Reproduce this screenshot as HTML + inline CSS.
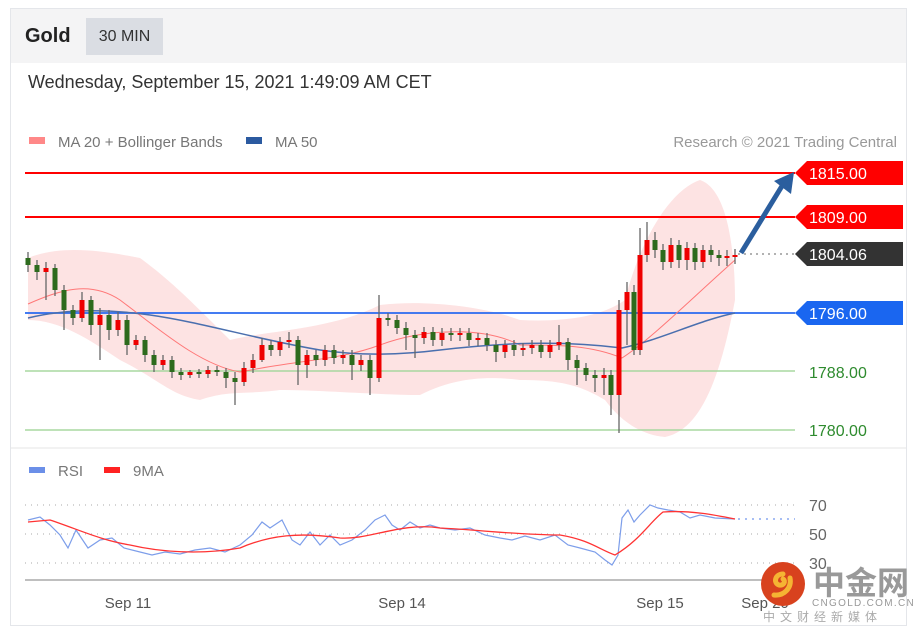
<!DOCTYPE html>
<html><head><meta charset="utf-8">
<style>
body{margin:0;background:#fff;width:916px;height:633px;overflow:hidden;font-family:"Liberation Sans",sans-serif;}
#box{position:absolute;left:10px;top:8px;width:895px;height:616px;border:1px solid #e4e6ea;}
#hdr{position:absolute;left:11px;top:9px;width:895px;height:54px;background:#f4f4f5;}
#gold{position:absolute;left:25px;top:25px;font-size:20px;font-weight:bold;color:#222;}
#tf{position:absolute;left:86px;top:18px;width:77px;height:37px;background:#dadde3;font-size:16px;color:#333;line-height:37px;text-align:center;}
#date{position:absolute;left:28px;top:72px;font-size:18px;color:#333;}
svg{position:absolute;left:0;top:0;}
.c line{stroke:#666;stroke-width:1.3}
.c .r{fill:#e00}.c .g{fill:#2d6b1d}
</style></head><body>
<div id="box"></div><div id="hdr"></div>
<div id="gold">Gold</div><div id="tf">30 MIN</div>
<div id="date">Wednesday, September 15, 2021 1:49:09 AM CET</div>
<svg width="916" height="633" font-family="Liberation Sans, sans-serif">
<rect x="29" y="137" width="16" height="7" fill="#f88"/>
<text x="58" y="147" font-size="15" fill="#777">MA 20 + Bollinger Bands</text>
<rect x="246" y="137" width="16" height="7" fill="#2b5aa0"/>
<text x="275" y="147" font-size="15" fill="#777">MA 50</text>
<text x="897" y="147" font-size="15" fill="#999" text-anchor="end">Research © 2021 Trading Central</text>
<line x1="11" y1="448" x2="906" y2="448" stroke="#e6e6e6"/>
<path fill="#fde3e3" d="M28 258 C60 245 100 250 140 258 C170 280 190 300 230 340 C270 330 330 330 380 305 C420 300 480 305 520 320 C560 322 600 318 625 300 C640 240 670 190 700 180 C730 190 735 260 735 300 C720 380 700 430 665 437 C640 435 620 420 605 400 C580 385 560 380 520 380 C480 375 450 380 420 395 C380 395 320 390 280 390 C240 395 230 390 200 400 C170 395 160 380 120 360 C90 340 60 320 28 320 Z"/>
<line x1="25" y1="371" x2="795" y2="371" stroke="#a8d8a0" stroke-width="1.5"/>
<line x1="25" y1="430" x2="795" y2="430" stroke="#a8d8a0" stroke-width="1.5"/>
<line x1="25" y1="173" x2="795" y2="173" stroke="#f00" stroke-width="2"/>
<line x1="25" y1="217" x2="795" y2="217" stroke="#f00" stroke-width="2"/>
<line x1="25" y1="313" x2="795" y2="313" stroke="#2a6af0" stroke-width="1.8"/>
<line x1="738" y1="254" x2="795" y2="254" stroke="#666" stroke-dasharray="2,4"/>
<path d="M28 304 C60 290 90 280 120 300 C160 330 200 365 240 372 C300 360 340 360 380 345 C420 330 480 325 520 345 C560 345 590 345 622 358 C650 340 690 300 735 260" fill="none" stroke="#f77" stroke-width="1"/>
<path d="M28 318 C60 310 100 308 150 315 C200 322 260 340 320 350 C360 356 400 355 440 350 C500 343 560 340 622 348 C660 340 700 320 735 313" fill="none" stroke="#4a6fae" stroke-width="1.5"/>
<g class="c">
<line x1="28" y1="252" x2="28" y2="272"/><rect class="g" x="25.5" y="258" width="5" height="7"/>
<line x1="37" y1="260" x2="37" y2="280"/><rect class="g" x="34.5" y="265" width="5" height="7"/>
<line x1="46" y1="262" x2="46" y2="300"/><rect class="r" x="43.5" y="268" width="5" height="4"/>
<line x1="55" y1="264" x2="55" y2="296"/><rect class="g" x="52.5" y="268" width="5" height="22"/>
<line x1="64" y1="285" x2="64" y2="330"/><rect class="g" x="61.5" y="290" width="5" height="20"/>
<line x1="73" y1="305" x2="73" y2="325"/><rect class="g" x="70.5" y="310" width="5" height="8"/>
<line x1="82" y1="292" x2="82" y2="322"/><rect class="r" x="79.5" y="300" width="5" height="18"/>
<line x1="91" y1="296" x2="91" y2="335"/><rect class="g" x="88.5" y="300" width="5" height="25"/>
<line x1="100" y1="308" x2="100" y2="360"/><rect class="r" x="97.5" y="315" width="5" height="10"/>
<line x1="109" y1="310" x2="109" y2="340"/><rect class="g" x="106.5" y="315" width="5" height="15"/>
<line x1="118" y1="312" x2="118" y2="336"/><rect class="r" x="115.5" y="320" width="5" height="10"/>
<line x1="127" y1="315" x2="127" y2="355"/><rect class="g" x="124.5" y="320" width="5" height="25"/>
<line x1="136" y1="335" x2="136" y2="350"/><rect class="r" x="133.5" y="340" width="5" height="5"/>
<line x1="145" y1="336" x2="145" y2="362"/><rect class="g" x="142.5" y="340" width="5" height="15"/>
<line x1="154" y1="350" x2="154" y2="372"/><rect class="g" x="151.5" y="355" width="5" height="10"/>
<line x1="163" y1="355" x2="163" y2="370"/><rect class="r" x="160.5" y="360" width="5" height="5"/>
<line x1="172" y1="356" x2="172" y2="378"/><rect class="g" x="169.5" y="360" width="5" height="12"/>
<line x1="181" y1="368" x2="181" y2="380"/><rect class="g" x="178.5" y="372" width="5" height="3"/>
<line x1="190" y1="370" x2="190" y2="378"/><rect class="r" x="187.5" y="372" width="5" height="3"/>
<line x1="199" y1="369" x2="199" y2="378"/><rect class="g" x="196.5" y="372" width="5" height="2"/>
<line x1="208" y1="366" x2="208" y2="378"/><rect class="r" x="205.5" y="370" width="5" height="4"/>
<line x1="217" y1="366" x2="217" y2="376"/><rect class="g" x="214.5" y="370" width="5" height="2"/>
<line x1="226" y1="368" x2="226" y2="388"/><rect class="g" x="223.5" y="372" width="5" height="6"/>
<line x1="235" y1="372" x2="235" y2="405"/><rect class="g" x="232.5" y="378" width="5" height="4"/>
<line x1="244" y1="362" x2="244" y2="386"/><rect class="r" x="241.5" y="368" width="5" height="14"/>
<line x1="253" y1="354" x2="253" y2="373"/><rect class="r" x="250.5" y="360" width="5" height="8"/>
<line x1="262" y1="338" x2="262" y2="362"/><rect class="r" x="259.5" y="345" width="5" height="15"/>
<line x1="271" y1="340" x2="271" y2="356"/><rect class="g" x="268.5" y="345" width="5" height="5"/>
<line x1="280" y1="337" x2="280" y2="356"/><rect class="r" x="277.5" y="342" width="5" height="8"/>
<line x1="289" y1="332" x2="289" y2="348"/><rect class="r" x="286.5" y="340" width="5" height="2"/>
<line x1="298" y1="336" x2="298" y2="385"/><rect class="g" x="295.5" y="340" width="5" height="25"/>
<line x1="307" y1="350" x2="307" y2="378"/><rect class="r" x="304.5" y="355" width="5" height="10"/>
<line x1="316" y1="350" x2="316" y2="366"/><rect class="g" x="313.5" y="355" width="5" height="5"/>
<line x1="325" y1="345" x2="325" y2="366"/><rect class="r" x="322.5" y="350" width="5" height="10"/>
<line x1="334" y1="345" x2="334" y2="364"/><rect class="g" x="331.5" y="350" width="5" height="8"/>
<line x1="343" y1="350" x2="343" y2="364"/><rect class="r" x="340.5" y="355" width="5" height="3"/>
<line x1="352" y1="350" x2="352" y2="380"/><rect class="g" x="349.5" y="355" width="5" height="10"/>
<line x1="361" y1="355" x2="361" y2="371"/><rect class="r" x="358.5" y="360" width="5" height="5"/>
<line x1="370" y1="355" x2="370" y2="395"/><rect class="g" x="367.5" y="360" width="5" height="18"/>
<line x1="379" y1="295" x2="379" y2="382"/><rect class="r" x="376.5" y="318" width="5" height="60"/>
<line x1="388" y1="313" x2="388" y2="326"/><rect class="g" x="385.5" y="318" width="5" height="2"/>
<line x1="397" y1="315" x2="397" y2="334"/><rect class="g" x="394.5" y="320" width="5" height="8"/>
<line x1="406" y1="322" x2="406" y2="350"/><rect class="g" x="403.5" y="328" width="5" height="7"/>
<line x1="415" y1="330" x2="415" y2="358"/><rect class="g" x="412.5" y="335" width="5" height="3"/>
<line x1="424" y1="327" x2="424" y2="344"/><rect class="r" x="421.5" y="332" width="5" height="6"/>
<line x1="433" y1="327" x2="433" y2="346"/><rect class="g" x="430.5" y="332" width="5" height="8"/>
<line x1="442" y1="328" x2="442" y2="346"/><rect class="r" x="439.5" y="333" width="5" height="7"/>
<line x1="451" y1="328" x2="451" y2="341"/><rect class="g" x="448.5" y="333" width="5" height="2"/>
<line x1="460" y1="328" x2="460" y2="341"/><rect class="r" x="457.5" y="333" width="5" height="2"/>
<line x1="469" y1="328" x2="469" y2="346"/><rect class="g" x="466.5" y="333" width="5" height="7"/>
<line x1="478" y1="333" x2="478" y2="346"/><rect class="r" x="475.5" y="338" width="5" height="2"/>
<line x1="487" y1="333" x2="487" y2="351"/><rect class="g" x="484.5" y="338" width="5" height="7"/>
<line x1="496" y1="340" x2="496" y2="362"/><rect class="g" x="493.5" y="345" width="5" height="7"/>
<line x1="505" y1="340" x2="505" y2="358"/><rect class="r" x="502.5" y="345" width="5" height="7"/>
<line x1="514" y1="340" x2="514" y2="356"/><rect class="g" x="511.5" y="345" width="5" height="5"/>
<line x1="523" y1="343" x2="523" y2="356"/><rect class="r" x="520.5" y="348" width="5" height="2"/>
<line x1="532" y1="340" x2="532" y2="354"/><rect class="r" x="529.5" y="345" width="5" height="3"/>
<line x1="541" y1="340" x2="541" y2="358"/><rect class="g" x="538.5" y="345" width="5" height="7"/>
<line x1="550" y1="340" x2="550" y2="358"/><rect class="r" x="547.5" y="345" width="5" height="7"/>
<line x1="559" y1="325" x2="559" y2="350"/><rect class="r" x="556.5" y="342" width="5" height="3"/>
<line x1="568" y1="338" x2="568" y2="370"/><rect class="g" x="565.5" y="342" width="5" height="18"/>
<line x1="577" y1="355" x2="577" y2="385"/><rect class="g" x="574.5" y="360" width="5" height="8"/>
<line x1="586" y1="363" x2="586" y2="381"/><rect class="g" x="583.5" y="368" width="5" height="7"/>
<line x1="595" y1="370" x2="595" y2="392"/><rect class="g" x="592.5" y="375" width="5" height="3"/>
<line x1="604" y1="368" x2="604" y2="395"/><rect class="r" x="601.5" y="375" width="5" height="3"/>
<line x1="611" y1="370" x2="611" y2="415"/><rect class="g" x="608.5" y="375" width="5" height="20"/>
<line x1="619" y1="300" x2="619" y2="433"/><rect class="r" x="616.5" y="310" width="5" height="85"/>
<line x1="627" y1="282" x2="627" y2="345"/><rect class="r" x="624.5" y="292" width="5" height="18"/>
<line x1="634" y1="285" x2="634" y2="355"/><rect class="g" x="631.5" y="292" width="5" height="58"/>
<line x1="640" y1="228" x2="640" y2="355"/><rect class="r" x="637.5" y="255" width="5" height="95"/>
<line x1="647" y1="222" x2="647" y2="262"/><rect class="r" x="644.5" y="240" width="5" height="15"/>
<line x1="655" y1="232" x2="655" y2="258"/><rect class="g" x="652.5" y="240" width="5" height="10"/>
<line x1="663" y1="244" x2="663" y2="270"/><rect class="g" x="660.5" y="250" width="5" height="12"/>
<line x1="671" y1="238" x2="671" y2="268"/><rect class="r" x="668.5" y="245" width="5" height="17"/>
<line x1="679" y1="240" x2="679" y2="268"/><rect class="g" x="676.5" y="245" width="5" height="15"/>
<line x1="687" y1="242" x2="687" y2="270"/><rect class="r" x="684.5" y="248" width="5" height="12"/>
<line x1="695" y1="243" x2="695" y2="270"/><rect class="g" x="692.5" y="248" width="5" height="14"/>
<line x1="703" y1="245" x2="703" y2="268"/><rect class="r" x="700.5" y="250" width="5" height="12"/>
<line x1="711" y1="245" x2="711" y2="262"/><rect class="g" x="708.5" y="250" width="5" height="5"/>
<line x1="719" y1="250" x2="719" y2="266"/><rect class="g" x="716.5" y="255" width="5" height="3"/>
<line x1="727" y1="250" x2="727" y2="266"/><rect class="r" x="724.5" y="256" width="5" height="2"/>
<line x1="735" y1="249" x2="735" y2="264"/><rect class="r" x="732.5" y="255" width="5" height="2"/>
</g>
<path d="M741 253 L782 186" stroke="#2b5e9e" stroke-width="5"/>
<path d="M774 181 L794 172 L791 194 Z" fill="#2b5e9e"/>
<path d="M795 173 L807 161 L903 161 L903 185 L807 185 Z" fill="#f00"/>
<text x="809" y="179" font-size="16" fill="#fff">1815.00</text>
<path d="M795 217 L807 205 L903 205 L903 229 L807 229 Z" fill="#f00"/>
<text x="809" y="223" font-size="16" fill="#fff">1809.00</text>
<path d="M795 254 L807 242 L903 242 L903 266 L807 266 Z" fill="#333"/>
<text x="809" y="260" font-size="16" fill="#fff">1804.06</text>
<path d="M795 313 L807 301 L903 301 L903 325 L807 325 Z" fill="#1a66f0"/>
<text x="809" y="319" font-size="16" fill="#fff">1796.00</text>
<text x="809" y="378" font-size="16" fill="#2e8b2e">1788.00</text>
<text x="809" y="436" font-size="16" fill="#2e8b2e">1780.00</text>
<rect x="29" y="467" width="16" height="6" fill="#6b8fe8"/>
<text x="58" y="476" font-size="15" fill="#777">RSI</text>
<rect x="104" y="467" width="16" height="6" fill="#f22"/>
<text x="133" y="476" font-size="15" fill="#777">9MA</text>
<g stroke="#bbb" stroke-dasharray="1,5" stroke-width="1.3">
<line x1="25" y1="505" x2="795" y2="505"/><line x1="25" y1="534" x2="795" y2="534"/><line x1="25" y1="563" x2="795" y2="563"/></g>
<g font-size="16" fill="#666"><text x="809" y="511">70</text><text x="809" y="540">50</text><text x="809" y="569">30</text></g>
<line x1="738" y1="519" x2="795" y2="519" stroke="#8aa8f0" stroke-dasharray="2,5" stroke-width="1.5"/>
<path d="M28 520 L40 517 L50 525 L60 535 L68 548 L76 530 L88 548 L100 540 L112 538 L124 548 L140 552 L152 555 L165 552 L180 554 L195 550 L210 548 L225 552 L240 545 L252 535 L262 522 L270 528 L282 520 L292 540 L300 545 L310 532 L320 545 L330 535 L340 545 L352 540 L365 530 L375 520 L385 515 L392 525 L400 530 L410 522 L420 528 L430 525 L440 528 L455 530 L470 528 L485 535 L500 538 L512 540 L525 536 L540 540 L555 535 L568 545 L580 548 L595 552 L605 560 L612 565 L618 555 L622 518 L628 510 L634 522 L640 515 L650 505 L658 508 L668 510 L680 512 L690 518 L700 515 L715 518 L735 519" fill="none" stroke="#7d9eea" stroke-width="1.2"/>
<path d="M28 522 L50 520 C80 530 100 540 130 545 C160 552 200 555 240 548 C270 535 300 532 340 538 C370 540 400 522 440 528 C480 530 520 535 560 535 C590 540 600 550 615 555 C640 540 650 522 663 512 C690 510 715 515 735 519" fill="none" stroke="#f33" stroke-width="1.3"/>
<line x1="25" y1="580" x2="795" y2="580" stroke="#aaa" stroke-width="1.5"/>
<g font-size="15" fill="#555" text-anchor="middle"><text x="128" y="608">Sep 11</text><text x="402" y="608">Sep 14</text><text x="660" y="608">Sep 15</text><text x="765" y="608">Sep 20</text></g>
<circle cx="783" cy="584" r="22" fill="#d8421e"/>
<path d="M783 574 c-8 0 -10 9 -4 11 c5 1 7 -4 4 -6 M790 578 c2 10 -6 18 -16 17" fill="none" stroke="#f5b433" stroke-width="5" stroke-linecap="round"/>
<text x="813" y="594" font-size="32" font-weight="bold" fill="#999" font-family="Noto Sans CJK SC, sans-serif">中金网</text>
<text x="812" y="606" font-size="10" fill="#999" letter-spacing="1.3">CNGOLD.COM.CN</text>
<text x="763" y="621" font-size="12" fill="#aaa" letter-spacing="5" font-family="Noto Sans CJK SC, sans-serif">中文财经新媒体</text>
</svg>
</body></html>
